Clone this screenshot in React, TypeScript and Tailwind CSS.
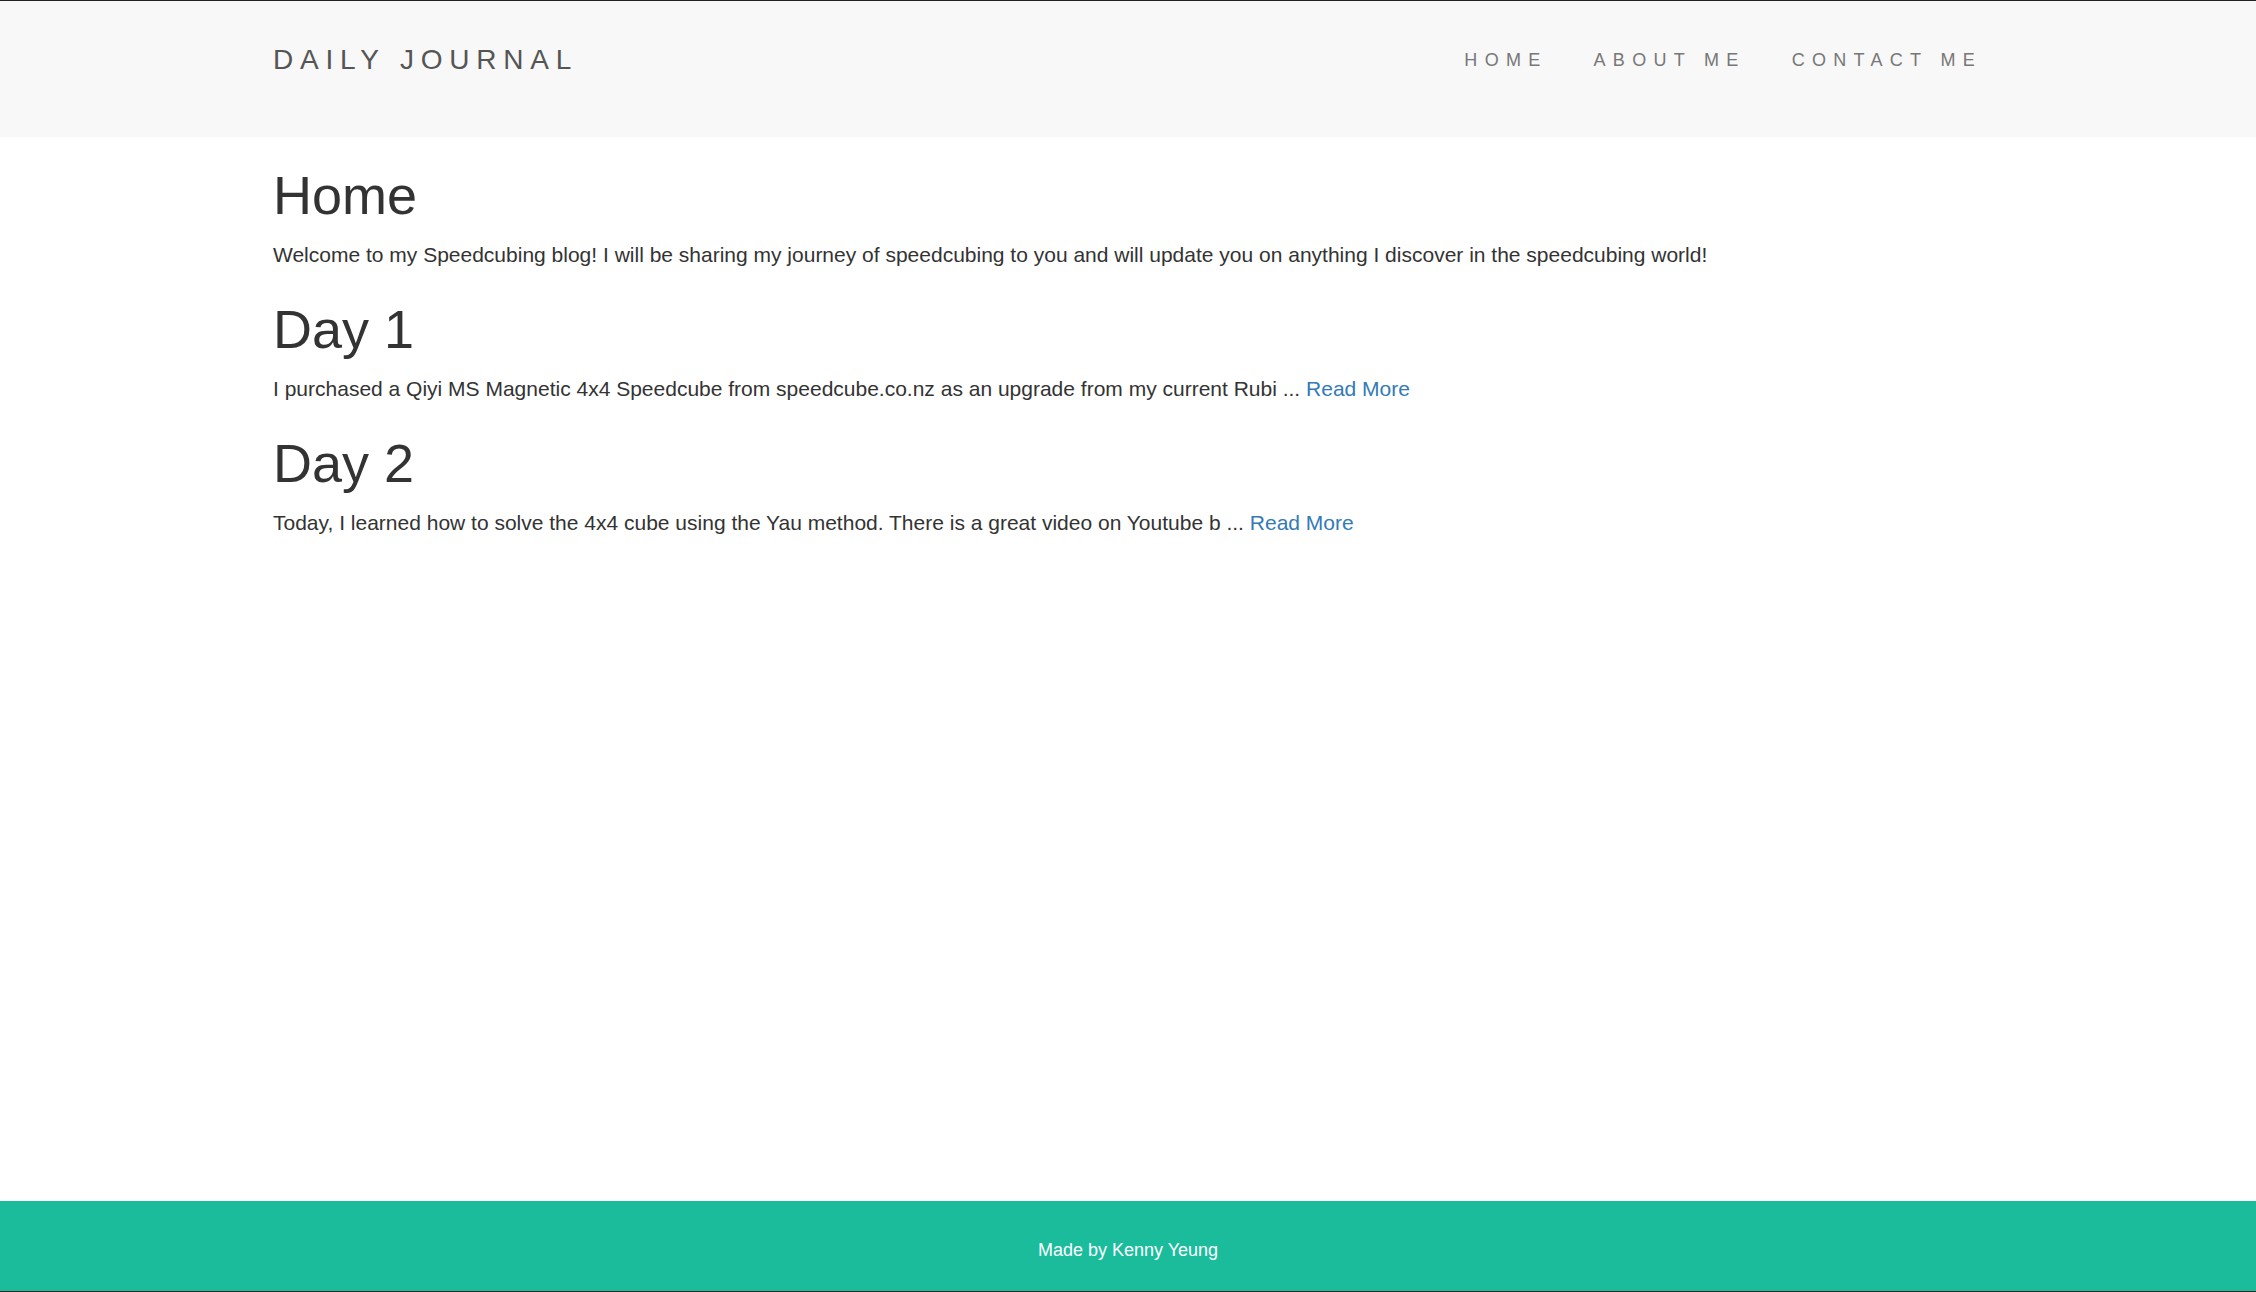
import React from "react";

const font = { fontFamily: '"Liberation Sans", Arial, Helvetica, sans-serif' };

const posts = [
  {
    title: "Day 1",
    body: "I purchased a Qiyi MS Magnetic 4x4 Speedcube from speedcube.co.nz as an upgrade from my current Rubi ...",
  },
  {
    title: "Day 2",
    body: "Today, I learned how to solve the 4x4 cube using the Yau method. There is a great video on Youtube b ...",
  },
];

export default function App() {
  return (
    <div className="min-h-screen flex flex-col bg-white text-[#333]" style={font}>
      <header className="bg-[#f8f8f8] border-t border-[#222] h-[137px]">
        <div className="flex items-center justify-between h-[118px] pl-[273px] pr-[274px]">
          <a className="text-[28px] leading-none tracking-[6.8px] text-[#555] uppercase">Daily Journal</a>
          <nav className="flex items-center gap-[46px] text-[18px] leading-none tracking-[7.3px] text-[#777]">
            <a>HOME</a>
            <a>ABOUT ME</a>
            <a>CONTACT ME</a>
          </nav>
        </div>
      </header>
      <main className="flex-1 pl-[273px] pr-[272px] pt-[30px] flex flex-col gap-[32px]">
        <section>
          <h1 className="text-[54px] leading-[57px] font-normal mb-[16px]">Home</h1>
          <p className="text-[21px] leading-[29px]">
            Welcome to my Speedcubing blog! I will be sharing my journey of speedcubing to you and will update you on anything I discover in the speedcubing world!
          </p>
        </section>
        {posts.map((p) => (
          <section key={p.title}>
            <h1 className="text-[54px] leading-[57px] font-normal mb-[16px]">{p.title}</h1>
            <p className="text-[21px] leading-[29px]">
              {p.body} <a className="text-[#337ab7]">Read More</a>
            </p>
          </section>
        ))}
      </main>
      <footer className="bg-[#1abc9c] h-[91px] border-b border-[#222] flex items-center justify-center pt-[8px]">
        <p className="text-white text-[18px] leading-none">Made by Kenny Yeung</p>
      </footer>
    </div>
  );
}
